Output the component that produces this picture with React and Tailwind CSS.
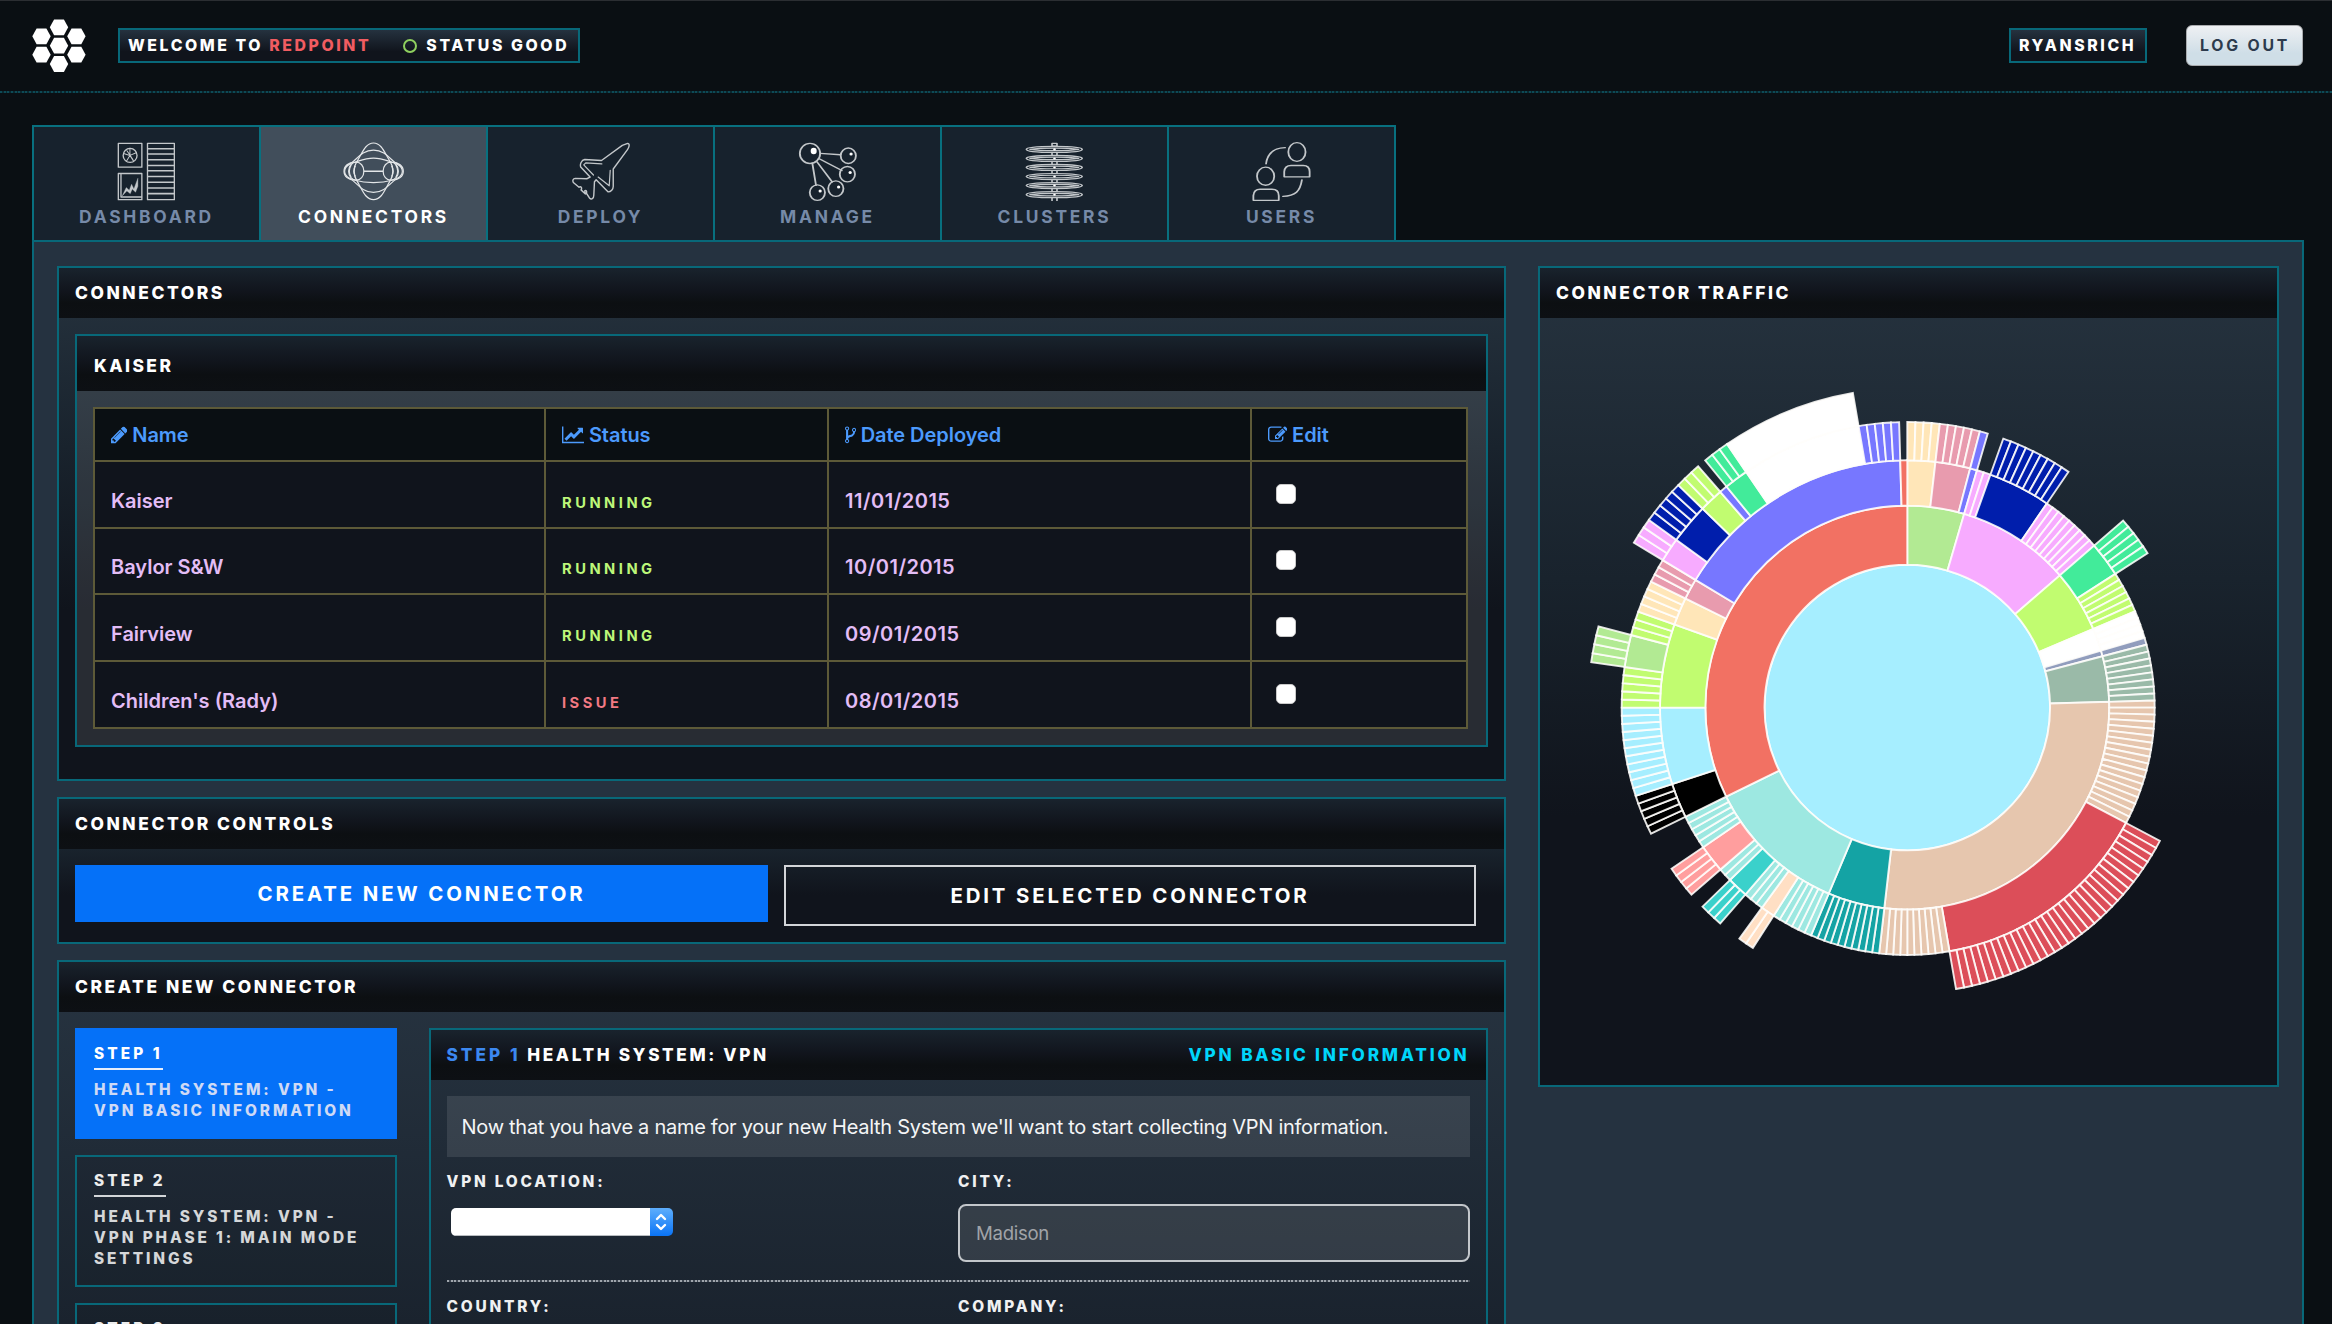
import React from "react";

const U = 360 / 220;
const CX = 370;
const CY = 390;
const radius = (k) => 142.8 * Math.sqrt(k);

const C = {
  sky: "#a6eeff", red: "#f27163", green: "#b2ea93", pink: "#f7abff", lime: "#c1fc70",
  white: "#ffffff", slate: "#919dbd", sage: "#9abaa8", tan: "#e6c6ae", teal: "#14a3a4",
  aqua: "#9de8e1", navy: "#001eac", mint: "#42eb9a", peach: "#ffe6b8", rose: "#e89bae",
  blue: "#7777ff", crimson: "#dc4e59", black: "#000000", salmon: "#ff9e9e", turq: "#3ad1cb", cream: "#ffdfc4",
};

// [ring, start, end, colour, striped]
const ARCS = [
  [1, 0, 10, "green"], [1, 10, 30, "pink"], [1, 30, 41, "lime"], [1, 41, 45, "white"], [1, 45, 46, "slate"],
  [1, 46, 54, "sage"], [1, 54, 114, "tan"], [1, 114, 124, "teal"], [1, 124, 149, "aqua"], [1, 149, 220, "red"],
  [2, 0, 4, "peach"], [2, 4, 9, "rose"], [2, 9, 10, "blue"], [2, 10, 12, "pink", 1], [2, 12, 21, "navy"],
  [2, 21, 30, "pink", 1], [2, 30, 35, "mint"], [2, 35, 41, "lime", 1], [2, 41, 45, "white", 1], [2, 45, 46, "slate"],
  [2, 46, 54, "sage", 1], [2, 54, 72, "tan", 1], [2, 72, 104, "crimson"], [2, 104, 114, "tan", 1],
  [2, 114, 124, "teal", 1], [2, 124, 130, "aqua", 1], [2, 130, 132, "cream"], [2, 132, 135, "aqua", 1],
  [2, 135, 138, "turq"], [2, 138, 140, "aqua", 1], [2, 140, 144, "salmon"], [2, 144, 149, "aqua", 1],
  [2, 149, 154, "black"], [2, 154, 165, "sky"], [2, 165, 177, "lime"], [2, 177, 181, "peach"], [2, 181, 184, "rose"],
  [2, 184, 219, "blue"], [2, 219, 220, "red"],
  [3, 0, 4, "peach", 1], [3, 4, 9, "rose", 1], [3, 9, 10, "blue"], [3, 12, 21, "navy", 1], [3, 30, 35, "mint", 1],
  [3, 72, 104, "crimson", 1], [3, 130, 132, "cream", 1], [3, 135, 138, "turq", 1], [3, 140, 144, "salmon", 1],
  [3, 149, 154, "black", 1], [3, 154, 165, "sky", 1], [3, 165, 170, "lime", 1], [3, 170, 174, "green"],
  [3, 174, 177, "lime", 1], [3, 177, 181, "peach", 1], [3, 181, 184, "rose", 1], [3, 184, 187, "pink"],
  [3, 187, 192, "navy"], [3, 192, 195, "lime"], [3, 195, 196, "blue"], [3, 196, 199, "mint"],
  [3, 199, 214, "white"], [3, 214, 219, "blue", 1],
  [4, 170, 174, "green", 1], [4, 184, 187, "pink", 1], [4, 187, 192, "navy", 1], [4, 192, 195, "lime", 1],
  [4, 196, 199, "mint", 1], [4, 199, 214, "white"],
];

function arcPath(ring, a, b) {
  const r0 = radius(ring);
  const r1 = radius(ring + 1);
  const pt = (r, t) => {
    const rad = (t * U * Math.PI) / 180;
    return `${(CX + r * Math.sin(rad)).toFixed(2)} ${(CY - r * Math.cos(rad)).toFixed(2)}`;
  };
  const large = (b - a) * U > 180 ? 1 : 0;
  return `M${pt(r1, a)}A${r1} ${r1} 0 ${large} 1 ${pt(r1, b)}L${pt(r0, b)}A${r0} ${r0} 0 ${large} 0 ${pt(r0, a)}Z`;
}

function Sunburst() {
  const parts = ARCS.flatMap(([ring, a, b, color, striped]) =>
    striped ? Array.from({ length: b - a }, (_, i) => [ring, a + i, a + i + 1, color]) : [[ring, a, b, color]]
  );
  return (
    <svg className="block w-[737px] h-[767px]" viewBox="2.7 0.4 737 767" stroke="#fffefc" strokeOpacity="0.88" strokeWidth="1.9">
      <circle cx={CX} cy={CY} r={radius(1)} fill={C.sky} />
      {parts.map(([ring, a, b, color]) => (
        <path key={`${ring}-${a}`} d={arcPath(ring, a, b)} fill={C[color]} />
      ))}
    </svg>
  );
}

const HEX = [[27, 8.3], [9.5, 17.3], [44.4, 17.3], [27, 26.7], [9.5, 35.7], [44.4, 35.7], [27, 45]];
const Logo = () => (
  <svg className="w-[54px] h-[54px]" viewBox="0 0 54 54" fill="#fff">
    {HEX.map(([x, y]) => (
      <path key={`${x}-${y}`} d={`M${x - 9.2} ${y}L${x - 4.9} ${y - 7.9}H${x + 4.9}L${x + 9.2} ${y}L${x + 4.9} ${y + 7.9}H${x - 4.9}Z`} />
    ))}
  </svg>
);

const iconProps = { fill: "none", stroke: "#c3c7ca", preserveAspectRatio: "none", strokeLinejoin: "round", strokeLinecap: "round" };

const DashboardIcon = () => (
  <svg {...iconProps} className="w-[59px] h-[59px]" viewBox="20 18 178 176" strokeWidth="4">
    <rect x="24" y="22" width="71" height="71" />
    <circle cx="59.500" cy="58" r="21" />
    <path d="M59 58V37M59 58L40 52M59 58L78 50M59 58L48 76M59 58L70 75M50 44L68 70" strokeWidth="3" />
    <rect x="24" y="112" width="71" height="78" />
    <path d="M32 114V182H94" />
    <path d="M36 178L48 154L57 162L64 144L71 158L83 126V150L76 168L66 158L60 172L50 164Z" fill="#c3c7ca" strokeWidth="1" />
    <rect x="112" y="22" width="81" height="168" />
    <path d="M114 38H192M114 54H192M114 71H192M114 88H192M114 104H192M114 121H192M114 138H192M114 155H192M114 172H192" strokeWidth="4.500" />
  </svg>
);

const ConnectorsIcon = () => (
  <svg {...iconProps} className="w-[61px] h-[59px]" viewBox="698 18 184 176" strokeWidth="3.600" stroke="#e3e6e8">
    <path d="M790 21C815 21 824 52 840 76C851 92 851 118 840 134C824 160 815 190 790 190C765 190 756 160 740 134C729 118 729 92 740 76C756 52 765 21 790 21Z" />
    <path d="M790 42C828 42 842 74 862 84C882 95 882 115 862 126C842 136 828 168 790 168C752 168 738 136 718 126C698 115 698 95 718 84C738 74 752 42 790 42Z" />
    <path d="M790 66C815 66 832 74 846 78C866 78 880 90 880 105C880 120 866 132 846 132C832 136 815 139 790 139C765 139 748 136 734 132C714 132 701 120 701 105C701 90 714 78 734 78C748 74 765 66 790 66Z" />
    <ellipse cx="738" cy="105" rx="23" ry="27" />
    <ellipse cx="842" cy="105" rx="23" ry="27" />
    <path d="M762 105H818" strokeWidth="4.500" />
    <path d="M722 88C716 98 716 112 722 122M735 90C729 98 729 112 735 120M858 88C864 98 864 112 858 122M845 90C851 98 851 112 845 120" />
  </svg>
);

const DeployIcon = () => (
  <svg {...iconProps} className="w-[58px] h-[59px]" viewBox="1386 18 173 175" strokeWidth="4.200">
    <path d="M1552 22C1558 22 1558 32 1552 40L1509 98V150C1509 158 1502 166 1494 166L1458 130L1453 136L1451 176C1451 186 1444 190 1438 184L1429 170C1431 164 1428 160 1424 163L1426 172L1413 160C1417 154 1412 148 1407 152L1390 138C1387 132 1389 127 1396 126L1430 127L1440 122L1412 92C1409 84 1414 72 1424 70L1474 73L1536 28Z" />
    <path d="M1475 83L1427 80L1421 86L1450 116M1500 102L1497 148L1464 122" strokeWidth="3.600" />
  </svg>
);

const ManageIcon = () => (
  <svg {...iconProps} className="w-[60px] h-[59px]" viewBox="214 125 130 176" strokeWidth="4">
    <ellipse cx="240" cy="159" rx="22" ry="30" />
    <path d="M262 159L306 163M260 175L309 210M255 184L288 244M245 188L253 254" />
    {[[323, 166], [321, 221], [296, 264], [256, 276]].map(([x, y]) => (
      <g key={x}>
        <ellipse cx={x} cy={y} rx="16.500" ry="23" />
        <ellipse cx={x + 6} cy={y - 5} rx="3.500" ry="4.500" fill="#fff" stroke="none" />
      </g>
    ))}
    <ellipse cx="248" cy="152" rx="6.500" ry="9.500" fill="#fff" stroke="none" />
  </svg>
);

const ClustersIcon = () => (
  <svg {...iconProps} className="w-[59px] h-[59px]" viewBox="709 126 131 176" strokeWidth="3.600">
    {[148, 175, 202, 229, 256, 283].map((y) => (
      <g key={y}>
        <path d={`M712 ${y}C712 ${y - 7} 750 ${y - 9} 774 ${y - 9}S836 ${y - 7} 836 ${y}S798 ${y + 9} 774 ${y + 9}S712 ${y + 7} 712 ${y}Z`} />
        <path d={`M720 ${y}C745 ${y - 5} 803 ${y - 5} 828 ${y}C803 ${y + 5} 745 ${y + 5} 720 ${y}Z`} />
        <circle cx="774.500" cy={y} r="3" fill="#fff" stroke="none" />
        <path d={`M769 ${y + 9}V${y + 18}M780 ${y + 9}V${y + 18}`} />
      </g>
    ))}
    <rect x="769" y="130" width="11" height="8" />
  </svg>
);

const UsersIcon = () => (
  <svg {...iconProps} className="w-[59px] h-[59px]" viewBox="1202 125 130 176" strokeWidth="4">
    <ellipse cx="1301" cy="155" rx="19" ry="28" />
    <ellipse cx="1232" cy="227" rx="19" ry="27" />
    <path d="M1273 229V214Q1274 195 1288 195H1315Q1329 195 1329 214V229ZM1205 299V285Q1206 266 1220 266H1246Q1261 266 1261 285V299Z" />
    <path d="M1233 190C1236 158 1250 143 1275 142M1312 238C1308 272 1298 286 1270 287" />
  </svg>
);

const TABS = [
  ["Dashboard", DashboardIcon], ["Connectors", ConnectorsIcon], ["Deploy", DeployIcon],
  ["Manage", ManageIcon], ["Clusters", ClustersIcon], ["Users", UsersIcon],
];

const Pencil = () => (
  <svg className="w-[16.8px] h-[19.6px]" viewBox="128 0 1536 1792" fill="currentColor">
    <path d="M491 1536l91-91-235-235-91 91v107h128v128h107zm523-928q0-22-22-22-10 0-17 7l-542 542q-7 7-7 17 0 22 22 22 10 0 17-7l542-542q7-7 7-17zm-54-192l416 416-832 832h-416v-416zm683 96q0 53-37 90l-166 166-416-416 166-165q36-38 91-38 53 0 91 38l235 234q37 39 37 91z" />
  </svg>
);
const LineChart = () => (
  <svg className="w-[22.4px] h-[19.6px]" viewBox="0 0 2048 1792" fill="currentColor">
    <path d="M2048 1536v128h-2048v-1536h128v1408h1920zm-128-1248v435q0 21-19.5 29.5t-35.5-7.5l-121-121-633 633q-10 10-23 10t-23-10l-233-233-416 416-192-192 585-585q10-10 23-10t23 10l233 233 464-464-121-121q-16-16-7.5-35.5t29.5-19.5h435q14 0 23 9t9 23z" />
  </svg>
);
const CodeFork = () => (
  <svg className="w-[11.2px] h-[19.6px]" viewBox="384 0 1024 1792" fill="currentColor">
    <path d="M672 1472q0-40-28-68t-68-28-68 28-28 68 28 68 68 28 68-28 28-68zm0-1152q0-40-28-68t-68-28-68 28-28 68 28 68 68 28 68-28 28-68zm640 128q0-40-28-68t-68-28-68 28-28 68 28 68 68 28 68-28 28-68zm96 0q0 52-26 96.5t-70 69.5q-2 287-226 414-67 38-203 81-128 40-169.5 71t-41.5 100v26q44 25 70 69.5t26 96.5q0 80-56 136t-136 56-136-56-56-136q0-52 26-96.5t70-69.5v-820q-44-25-70-69.5t-26-96.5q0-80 56-136t136-56 136 56 56 136q0 52-26 96.5t-70 69.5v497q54-26 154-57 55-17 87.5-29.5t70.5-31 59-39.5 40.5-51 28-69.5 8.5-91.5q-44-25-70-69.5t-26-96.5q0-80 56-136t136-56 136 56 56 136z" />
  </svg>
);
const EditIcon = () => (
  <svg className="w-[19.6px] h-[19.6px]" viewBox="0 0 1792 1792" fill="currentColor">
    <path d="M888 1184l116-116-152-152-116 116v56h96v96h56zm440-720q-16-16-33 1l-350 350q-17 17-1 33t33-1l350-350q17-17 1-33zm80 594v190q0 119-84.5 203.5t-203.5 84.5h-832q-119 0-203.5-84.5t-84.5-203.5v-832q0-119 84.5-203.5t203.5-84.5h832q63 0 117 25 15 7 18 23 3 17-9 29l-49 49q-14 14-32 8-23-6-45-6h-832q-66 0-113 47t-47 113v832q0 66 47 113t113 47h832q66 0 113-47t47-113v-126q0-13 9-22l64-64q15-15 35-7t20 29zm-96-738l288 288-672 672h-288v-288zm444 132l-92 92-288-288 92-92q28-28 68-28t68 28l152 152q28 28 28 68t-28 68z" />
  </svg>
);

const COLUMNS = [
  ["Name", Pencil, "w-[451px]"], ["Status", LineChart, "w-[283px]"],
  ["Date Deployed", CodeFork, "w-[423px]"], ["Edit", EditIcon, "w-[216px]"],
];
const ROWS = [
  ["Kaiser", "RUNNING", "11/01/2015", "h-[67px]"],
  ["Baylor S&W", "RUNNING", "10/01/2015", "h-[66px]"],
  ["Fairview", "RUNNING", "09/01/2015", "h-[67px]"],
  ["Children's (Rady)", "ISSUE", "08/01/2015", "h-[67px]"],
];

const STEPS = [
  ["STEP 1", ["HEALTH SYSTEM: VPN -", "VPN BASIC INFORMATION"], true],
  ["STEP 2", ["HEALTH SYSTEM: VPN -", "VPN PHASE 1: MAIN MODE", "SETTINGS"], false],
  ["STEP 3", [], false],
];

const headerBg = "bg-[linear-gradient(to_bottom,#19232d_0%,#11151d_45%,#0c0f12_70%,#0d1014_100%)]";

function Panel({ title, className, children }) {
  return (
    <section className={`flex flex-col border-2 border-[#086879] ${className}`}>
      <h2 className={`h-[50px] shrink-0 flex items-center pl-[16px] text-[17.4px] font-extrabold tracking-[2.56px] text-white ${headerBg}`}>{title}</h2>
      {children}
    </section>
  );
}

const Label = ({ children }) => (
  <div className="h-6 leading-6 text-[15.4px] font-extrabold tracking-[2.8px] text-[#f0f1f2]">{children}</div>
);

function Table() {
  return (
    <table className="w-[1375px] table-fixed border-collapse text-[20px] font-semibold">
      <thead>
        <tr className="h-[53px] bg-[#0a0f13] text-[#4c9afc]">
          {COLUMNS.map(([name, Icon, w]) => (
            <th key={name} className={`${w} border-2 border-[#5d5a38] p-0 font-semibold`}>
              <div className="flex items-center gap-[5px] pl-[15.5px] leading-6 tracking-[-0.05px]"><Icon />{name}</div>
            </th>
          ))}
        </tr>
      </thead>
      <tbody>
        {ROWS.map(([name, status, date, h]) => (
          <tr key={name} className={`${h} bg-[#10141c] text-[#e3bdf6]`}>
            <td className="border-2 border-[#5d5a38] p-0 pl-[16px] pt-[12px] leading-6">{name}</td>
            <td className={`border-2 border-[#5d5a38] p-0 pl-[16px] pt-[16px] leading-6 text-[14.7px] font-bold tracking-[3.5px] ${status === "ISSUE" ? "text-[#f27983]" : "text-[#bdf779]"}`}>{status}</td>
            <td className="border-2 border-[#5d5a38] p-0 pl-[16px] pt-[12px] leading-6 tracking-[0.5px]">{date}</td>
            <td className="border-2 border-[#5d5a38] p-0 pl-[24px]">
              <div className="w-[20px] h-[20px] mb-[2px] rounded-[5px] bg-white border border-[#c9c9c9]" />
            </td>
          </tr>
        ))}
      </tbody>
    </table>
  );
}

export default function App() {
  return (
    <div className="w-[2332px] h-[1324px] overflow-hidden flex flex-col bg-[#0a0f13] border-t border-[#2b2e32] font-['Inter',sans-serif] text-white">
      <header className="h-[90px] shrink-0 flex items-center justify-between pl-8 pr-[29px] pb-[1px]">
        <div className="flex items-center gap-[32px]">
          <Logo />
          <div className="w-[462px] h-[35px] flex items-center pl-[8px] pt-[1px] border-2 border-[#086879] bg-[linear-gradient(to_bottom,#25323f,#10141c_70%)] text-[15.8px] font-extrabold tracking-[2.6px] whitespace-pre">
            WELCOME TO <span className="text-[#f15c61]">REDPOINT</span>
            <span className="ml-[32px] mr-[9px] w-[14px] h-[14px] rounded-full border-[2.5px] border-[#8fd05f]" />
            STATUS GOOD
          </div>
        </div>
        <div className="flex items-center gap-[39px]">
          <div className="w-[138px] h-[35px] flex items-center pl-[8px] pt-[1px] border-2 border-[#086879] bg-[linear-gradient(to_bottom,#25323f,#10141c_70%)] text-[15.8px] font-extrabold tracking-[2.6px]">RYANSRICH</div>
          <div className="w-[117px] h-[41px] flex items-center pl-[13px] pt-[1px] rounded-[6px] bg-[linear-gradient(to_bottom,#eef0f3,#cfdee7_70%)] border border-[#a9abae] text-[15.8px] font-bold tracking-[2.8px] text-[#2d3b4d]">LOG OUT</div>
        </div>
      </header>
      <div className="h-[2px] shrink-0 bg-[repeating-linear-gradient(to_right,#0d4a56_0px,#0d4a56_2px,#0b272e_2px,#0b272e_3.64px)]" />

      <nav className="mt-[32px] ml-8 w-[1364px] h-[115px] shrink-0 flex border-t-2 border-l-2 border-[#08707f]">
        {TABS.map(([name, Icon]) => {
          const active = name === "Connectors";
          return (
            <div key={name} className={`w-[227px] flex flex-col items-center pt-[15px] border-r-2 border-[#08707f] ${active ? "bg-[#414e5b] text-white" : "bg-[#17222d] text-[#768aa8]"}`}>
              <Icon />
              <div className="mt-[4px] leading-6 text-[17.4px] font-bold uppercase tracking-[2.75px]">{name}</div>
            </div>
          );
        })}
      </nav>

      <main className="ml-8 w-[2272px] h-[1200px] shrink-0 flex items-start gap-[32px] pl-[23px] pt-[24px] bg-[#253240] border-2 border-[#086879]">
        <div className="w-[1449px] flex flex-col gap-[16px]">
          <Panel title="CONNECTORS" className="h-[515px] bg-[linear-gradient(to_bottom,#26333f_0%,#19232d_35%,#10141c_67%)]">
            <div className="mt-[16px] ml-[16px] w-[1413px] h-[413px] flex flex-col border-2 border-[#086879] bg-white/10">
              <h3 className={`h-[55px] shrink-0 flex items-center pl-[17px] pt-[5px] text-[17.4px] font-extrabold tracking-[2.42px] ${headerBg}`}>KAISER</h3>
              <div className="pt-[16px] pl-[16px]"><Table /></div>
            </div>
          </Panel>

          <Panel title="CONNECTOR CONTROLS" className="h-[147px] bg-[linear-gradient(to_bottom,#26333f_0%,#19232d_35%,#10141c_67%)]">
            <div className="flex items-start gap-[16px] pt-[16px] pl-[16px] text-[20.4px] font-bold tracking-[2.88px]">
              <div className="w-[693px] h-[57px] pt-[2px] flex items-center justify-center bg-[#0571f8]">CREATE NEW CONNECTOR</div>
              <div className="w-[692px] h-[61px] pt-[1px] flex items-center justify-center border-2 border-[#d3d5d8]">EDIT SELECTED CONNECTOR</div>
            </div>
          </Panel>

          <Panel title="CREATE NEW CONNECTOR" className="h-[700px] bg-[linear-gradient(to_bottom,#273441_0%,#1a232e_52%,#10141c_100%)]">
            <div className="flex items-start gap-[32px] pt-[16px] pl-[16px]">
              <div className="w-[321.500px] flex flex-col gap-[16px] text-[15.4px] font-extrabold leading-[21px]">
                {STEPS.map(([title, lines, active]) => (
                  <div key={title} className={`flex flex-col items-start border-2 pl-[17px] pt-[13px] pb-[16px] ${active ? "bg-[#0571f8] border-[#0571f8] text-[#cfdaf5]" : "bg-black/5 border-[#086879] text-[#d5d7d9]"}`}>
                    <div className={`h-[27px] border-b-2 tracking-[3.1px] ${active ? "border-[#e6eefc] text-white" : "border-[#d2d5d8] text-[#eceded]"}`}>{title}</div>
                    <div className="mt-[9px] tracking-[2.9px]">
                      {lines.map((line) => <div key={line}>{line}</div>)}
                    </div>
                  </div>
                ))}
              </div>

              <div className="w-[1059px] h-[640px] border-2 border-[#086879]">
                <div className={`h-[50px] flex items-center justify-between pl-[16px] pr-[16px] text-[17.2px] font-extrabold ${headerBg}`}>
                  <div className="whitespace-pre tracking-[2.62px]"><span className="text-[#3c88f0] tracking-[3px]">STEP 1 </span>HEALTH SYSTEM: VPN</div>
                  <div className="tracking-[2.8px] text-[#00d5fa]">VPN BASIC INFORMATION</div>
                </div>
                <div className="px-[16px] pt-[16px]">
                  <div className="h-[61px] flex items-center pl-[15px] bg-white/10 text-[20px] tracking-[-0.28px] text-[#f4f5f6]">
                    Now that you have a name for your new Health System we'll want to start collecting VPN information.
                  </div>
                  <div className="mt-[13px] grid grid-cols-2">
                    <div>
                      <Label>VPN LOCATION:</Label>
                      <div className="mt-[14px] ml-[4px] w-[222px] h-[28px] flex rounded-[5px] overflow-hidden">
                        <div className="flex-1 bg-white border-b border-[#b8bcc0]" />
                        <div className="w-[23px] flex items-center justify-center bg-[linear-gradient(to_bottom,#5eaefc,#0a74f6)]">
                          <svg className="w-[12px] h-[18px]" viewBox="0 0 12 18" fill="none" stroke="#fff" strokeWidth="2.400" strokeLinecap="round" strokeLinejoin="round">
                            <path d="M2 6L6 2L10 6M2 12L6 16L10 12" />
                          </svg>
                        </div>
                      </div>
                    </div>
                    <div>
                      <Label>CITY:</Label>
                      <div className="mt-[10px] h-[58px] flex items-center pl-[16px] pt-[2px] rounded-[8px] border-2 border-[#c3c7cb] bg-white/10 text-[18.6px] tracking-[-0.3px] text-[#a0a3a8]">Madison</div>
                    </div>
                  </div>
                  <div className="mt-[18px] mb-[13px] h-[2px] bg-[repeating-linear-gradient(to_right,#a0a6ad_0px,#a0a6ad_2px,#3d4651_2px,#3d4651_3.64px)]" />
                  <div className="grid grid-cols-2">
                    <Label>COUNTRY:</Label>
                    <Label>COMPANY:</Label>
                  </div>
                </div>
              </div>
            </div>
          </Panel>
        </div>

        <Panel title="CONNECTOR TRAFFIC" className="w-[741px] h-[821px] bg-[linear-gradient(to_bottom,#26333f_0%,#19232d_38%,#10141c_67%)]">
          <Sunburst />
        </Panel>
      </main>
    </div>
  );
}
